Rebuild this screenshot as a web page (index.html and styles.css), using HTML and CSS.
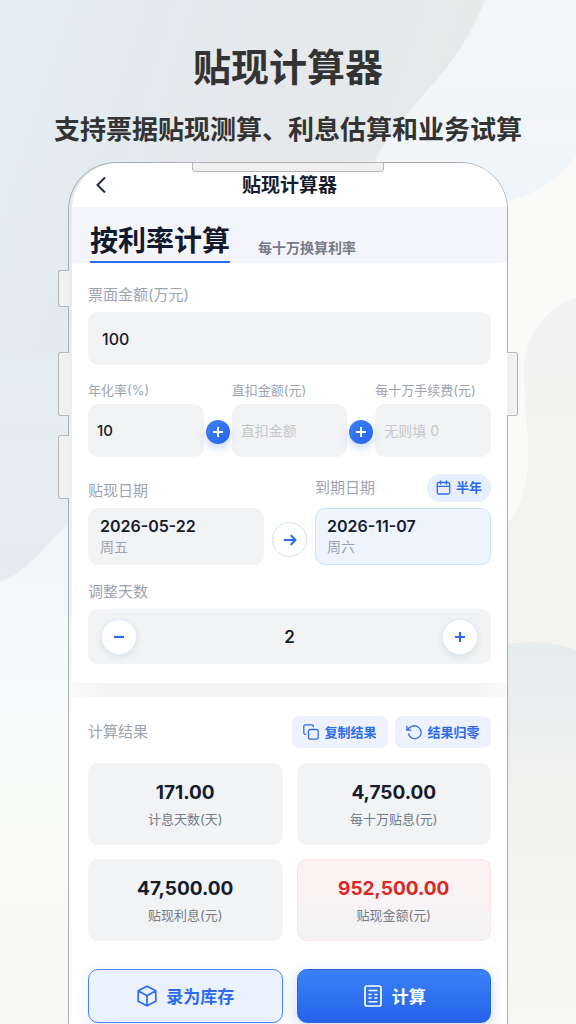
FILE: index.html
```
<!DOCTYPE html>
<html lang="zh-CN">

<head>
  <meta charset="UTF-8">
  <meta name="viewport" content="width=device-width, initial-scale=1.0">
  <title>贴现计算器</title>
  <link rel="stylesheet" href="styles.css">
</head>

<body>
  <div class="showcase">
    <svg class="backdrop" viewBox="0 0 576 1024" preserveAspectRatio="none" aria-hidden="true">
      <defs>
        <linearGradient id="base" gradientUnits="userSpaceOnUse" x1="0" y1="0" x2="500" y2="160">
          <stop offset="0" stop-color="#e5eef7" />
          <stop offset="0.25" stop-color="#e3ebee" />
          <stop offset="0.5" stop-color="#e6e8ec" />
          <stop offset="0.8" stop-color="#e6eaea" />
          <stop offset="1" stop-color="#e5e9e8" />
        </linearGradient>
        <linearGradient id="leftLow" x1="0" y1="0" x2="0" y2="1">
          <stop offset="0" stop-color="#eff4f7" />
          <stop offset="0.4" stop-color="#f8fbfb" />
          <stop offset="0.8" stop-color="#f9faf4" />
          <stop offset="1" stop-color="#f8f8f6" />
        </linearGradient>
        <linearGradient id="leftMid" x1="0" y1="0" x2="0" y2="1">
          <stop offset="0" stop-color="#e4edf0" />
          <stop offset="1" stop-color="#e8ebf1" />
        </linearGradient>
        <linearGradient id="rightTop" x1="0" y1="0" x2="0" y2="1">
          <stop offset="0" stop-color="#f4f5f7" />
          <stop offset="1" stop-color="#f0f5f9" />
        </linearGradient>
        <linearGradient id="rightMid" x1="0" y1="0" x2="0" y2="1">
          <stop offset="0" stop-color="#f2f2f2" />
          <stop offset="1" stop-color="#f4f4ef" />
        </linearGradient>
        <linearGradient id="rightLow" x1="0" y1="0" x2="0" y2="1">
          <stop offset="0" stop-color="#e6ebee" />
          <stop offset="0.4" stop-color="#f1f1ef" />
          <stop offset="1" stop-color="#f7f7f2" />
        </linearGradient>
      </defs>
      <rect width="576" height="1024" fill="url(#base)" />
      <path d="M0 358 C30 354 60 360 100 364 V600 H0Z" fill="url(#leftMid)" />
      <path d="M0 582 C36 570 50 530 100 500 V1024 H0Z" fill="url(#leftLow)" />
      <path d="M490 150 H576 V1024 H490Z" fill="#fafbf8" />
      <path d="M485 0 C462 60 425 90 398 125 C382 146 372 162 365 190 L500 204 C535 195 562 178 576 156 V0Z" fill="url(#rightTop)" />
      <path d="M576 298 C545 306 523 340 524 375 C525 420 532 450 526 480 C520 510 512 520 500 530 V700 H576Z" fill="url(#rightMid)" />
      <path d="M490 648 C520 640 550 640 576 650 V1024 H490Z" fill="url(#rightLow)" />
    </svg>

    <header class="headline">
      <h1>贴现计算器</h1>
      <p>支持票据贴现测算、利息估算和业务试算</p>
    </header>

    <div class="phone">
      <span class="side-key key-mute"></span>
      <span class="side-key key-up"></span>
      <span class="side-key key-down"></span>
      <span class="side-key key-power"></span>
      <span class="notch"></span>

      <main class="screen">
        <div class="nav-bar">
          <button class="back-btn" type="button" aria-label="返回">
            <svg width="12" height="18" viewBox="0 0 12 18" fill="none" stroke="currentColor" stroke-width="2">
              <path d="M10 1.500 2.500 9 10 16.500" />
            </svg>
          </button>
          <h2>贴现计算器</h2>
        </div>

        <nav class="tabs">
          <button class="tab active" type="button">按利率计算</button>
          <button class="tab" type="button">每十万换算利率</button>
        </nav>

        <form class="calc-form">
          <div class="field">
            <label for="amount">票面金额(万元)</label>
            <input id="amount" class="input input-large" type="text" value="100">
          </div>

          <div class="rate-row">
            <div class="field field-small">
              <label for="rate">年化率(%)</label>
              <input id="rate" class="input" type="text" value="10">
            </div>
            <div class="plus-cell"><span class="plus-dot"></span></div>
            <div class="field field-small">
              <label for="deduct">直扣金额(元)</label>
              <input id="deduct" class="input" type="text" placeholder="直扣金额">
            </div>
            <div class="plus-cell"><span class="plus-dot"></span></div>
            <div class="field field-small">
              <label for="fee">每十万手续费(元)</label>
              <input id="fee" class="input" type="text" placeholder="无则填 0">
            </div>
          </div>

          <div class="date-row">
            <div class="date-col">
              <div class="date-head">
                <span class="label">贴现日期</span>
              </div>
              <button class="date-card" type="button">
                <strong>2026-05-22</strong>
                <span>周五</span>
              </button>
            </div>
            <span class="date-arrow">
              <svg width="14" height="14" viewBox="0 0 14 14" fill="none" stroke="currentColor" stroke-width="2" stroke-linecap="round" stroke-linejoin="round">
                <path d="M1.500 7H12.500M8.300 2.700 12.500 7 8.300 11.300" />
              </svg>
            </span>
            <div class="date-col">
              <div class="date-head with-pill">
                <span class="label">到期日期</span>
                <button class="pill" type="button">
                  <svg width="15" height="15" viewBox="0 0 15 15" fill="none" stroke="currentColor" stroke-width="1.300" stroke-linecap="round" stroke-linejoin="round">
                    <rect x="1.300" y="2.500" width="12.400" height="11.500" rx="1.500" />
                    <path d="M1.300 6.300H13.700M4.600 .8V4M10.400 .8V4" />
                  </svg>
                  <span>半年</span>
                </button>
              </div>
              <button class="date-card selected" type="button">
                <strong>2026-11-07</strong>
                <span>周六</span>
              </button>
            </div>
          </div>

          <div class="field">
            <label for="days">调整天数</label>
            <div class="stepper">
              <button class="step-btn" type="button" aria-label="减少">
                <svg width="12" height="12" viewBox="0 0 12 12" stroke="currentColor" stroke-width="2.200">
                  <path d="M1 6H11" />
                </svg>
              </button>
              <input id="days" type="text" value="2">
              <button class="step-btn" type="button" aria-label="增加">
                <svg width="12" height="12" viewBox="0 0 12 12" stroke="currentColor" stroke-width="2.200">
                  <path d="M1 6H11M6 1V11" />
                </svg>
              </button>
            </div>
          </div>
        </form>

        <div class="divider"></div>

        <section class="results">
          <div class="results-head">
            <span class="label">计算结果</span>
            <div class="results-actions">
              <button class="tool-btn" type="button">
                <svg width="16" height="16" viewBox="0 0 16 16" fill="none" stroke="currentColor" stroke-width="1.300" stroke-linecap="round" stroke-linejoin="round">
                  <rect x="5.500" y="5.500" width="9.700" height="9.700" rx="1.700" />
                  <path d="M2.800 10.300H2.300A1.500 1.500 0 0 1 .8 8.800V2.300A1.500 1.500 0 0 1 2.300 .8H8.800A1.500 1.500 0 0 1 10.300 2.300V2.800" />
                </svg>
                <span>复制结果</span>
              </button>
              <button class="tool-btn" type="button">
                <svg width="16" height="16" viewBox="0 0 16 16" fill="none" stroke="currentColor" stroke-width="1.300" stroke-linecap="round" stroke-linejoin="round">
                  <path d="M.9 2.200V6.200H4.900M1.300 6C3.700 1.800 8.800 .5 12.400 3.200C15.400 5.500 15.900 9.600 13.700 12.300C11.400 15.200 7.100 15.400 4.400 12.900C3.500 12.100 2.900 11.100 2.600 9.800" />
                </svg>
                <span>结果归零</span>
              </button>
            </div>
          </div>

          <div class="result-grid">
            <div class="result-card">
              <strong>171.00</strong>
              <span>计息天数(天)</span>
            </div>
            <div class="result-card">
              <strong>4,750.00</strong>
              <span>每十万贴息(元)</span>
            </div>
            <div class="result-card">
              <strong>47,500.00</strong>
              <span>贴现利息(元)</span>
            </div>
            <div class="result-card highlight">
              <strong>952,500.00</strong>
              <span>贴现金额(元)</span>
            </div>
          </div>
        </section>

        <div class="action-bar">
          <button class="action-btn secondary" type="button">
            <svg width="22" height="22" viewBox="0 0 22 22" fill="none" stroke="currentColor" stroke-width="1.700" stroke-linecap="round" stroke-linejoin="round">
              <path d="M11 1.200 19.800 5.800V16.200L11 20.800 2.200 16.200V5.800ZM2.200 5.800 11 10.800 19.800 5.800M11 10.800V20.800" />
            </svg>
            <span>录为库存</span>
          </button>
          <button class="action-btn primary" type="button">
            <svg width="22" height="22" viewBox="0 0 22 22" fill="none" stroke="currentColor" stroke-width="1.700">
              <rect x="3" y="1" width="16" height="20" rx="2" />
              <path d="M6.500 5.500H15.500M6.500 9.500H9.700M12.300 9.500H15.500M6.500 13H9.700M12.300 13H15.500M6.500 16.800H15.500" stroke-width="1.500" />
            </svg>
            <span>计算</span>
          </button>
        </div>
      </main>
    </div>
  </div>
</body>

</html>
```
FILE: styles.css
```
* {
  box-sizing: border-box;
}

body {
  margin: 0;
  font-family: Inter, "Noto Sans CJK SC", sans-serif;
  color: #151c2e;
}

h1,
h2,
p {
  margin: 0;
}

button,
input {
  font-family: inherit;
  color: inherit;
  border: none;
  margin: 0;
}

button {
  padding: 0;
  background: none;
  cursor: pointer;
}

svg {
  flex-shrink: 0;
}

.showcase {
  position: relative;
  display: flex;
  flex-direction: column;
  min-height: 100vh;
  padding: 0 68px;
  overflow: hidden;
}

.backdrop {
  position: absolute;
  top: 0;
  left: 0;
  width: 100%;
  height: 100%;
}

.headline {
  position: relative;
  height: 162px;
  padding-top: 39px;
  text-align: center;
  white-space: nowrap;
  color: #333;
}

.headline h1 {
  font-size: 38px;
  line-height: 56px;
}

.headline p {
  margin: 16px -20px 0;
  font-size: 26px;
  font-weight: bold;
  line-height: 38px;
}

/* phone frame */
.phone {
  position: relative;
  flex: 1;
  display: flex;
  padding-left: 3px;
  border: 1px solid #a9adb0;
  border-bottom: none;
  border-radius: 48px 48px 0 0;
  background: linear-gradient(#e3ebee, #eef2f5 50%, #fdfdfd 65%);
}

.notch {
  position: absolute;
  z-index: 2;
  top: -1px;
  left: 50%;
  width: 192px;
  height: 10px;
  transform: translateX(-50%);
  border: 1px solid #b4b6b8;
  border-radius: 0 0 3px 3px;
  background: #f0f0f0;
}

.side-key {
  position: absolute;
  left: -11px;
  width: 11px;
  height: 64px;
  border: 1px solid #b4b6b8;
  border-right: none;
  border-radius: 3px 0 0 3px;
  background: #f1f1f1;
}

.key-mute {
  top: 107px;
  height: 37px;
}

.key-up {
  top: 189px;
}

.key-down {
  top: 272px;
}

.key-power {
  top: 189px;
  right: -11px;
  left: auto;
  border: 1px solid #b4b6b8;
  border-left: none;
  border-radius: 0 3px 3px 0;
}

.screen {
  flex: 1;
  min-width: 0;
  overflow: hidden;
  border-radius: 46px 46px 0 0;
  background: #fff;
}

.nav-bar {
  position: relative;
  height: 44px;
  display: flex;
  align-items: center;
  justify-content: center;
}

.nav-bar h2 {
  padding-top: 2px;
  font-size: 19px;
  line-height: 28px;
}

.back-btn {
  position: absolute;
  left: 23px;
  top: 13px;
  height: 18px;
  color: #1f2b4d;
}

.back-btn svg {
  display: block;
}

.tabs {
  display: flex;
  align-items: flex-end;
  gap: 28px;
  height: 56px;
  padding: 0 18px;
  background: #f4f5fb;
}

.tab {
  padding-bottom: 4px;
  font-size: 14px;
  font-weight: bold;
  line-height: 22px;
  color: #747b89;
}

.tab.active {
  padding-bottom: 0;
  border-bottom: 2px solid #2f6bf0;
  font-size: 28px;
  line-height: 40px;
  color: #121a2c;
}

/* form */
.calc-form {
  display: flex;
  flex-direction: column;
  padding: 21px 16px 19px;
}

.field {
  display: flex;
  flex-direction: column;
  gap: 6px;
  min-width: 0;
}

label,
.label {
  font-size: 15px;
  line-height: 22px;
  color: #9da4b1;
  white-space: nowrap;
}

.input {
  width: 100%;
  height: 53px;
  padding: 0 9px;
  border-radius: 10px;
  background: #f2f3f5;
  font-size: 15px;
  font-weight: 500;
}

.input::placeholder {
  color: #c6c7cb;
  font-size: 14px;
  font-weight: 400;
}

.input-large {
  padding: 0 14px;
  font-size: 16px;
}

.rate-row {
  display: grid;
  grid-template-columns: 1fr 24px 1fr 24px 1fr;
  column-gap: 2px;
  align-items: end;
  margin-top: 15px;
}

.field-small {
  gap: 4px;
}

.field-small label {
  font-size: 13px;
  line-height: 20px;
}

.plus-cell {
  display: flex;
  align-items: center;
  justify-content: center;
  height: 50px;
}

.plus-dot {
  position: relative;
  width: 24px;
  height: 24px;
  border-radius: 50%;
  background: linear-gradient(135deg, #3b82f6, #2563eb);
  box-shadow: 0 4px 10px rgba(37, 99, 235, 0.25);
}

.plus-dot::before,
.plus-dot::after {
  content: "";
  position: absolute;
  top: 11px;
  left: 7px;
  width: 10px;
  height: 2px;
  background: #fff;
}

.plus-dot::after {
  transform: rotate(90deg);
}

.date-row {
  display: flex;
  align-items: flex-end;
  gap: 8px;
  margin-top: 16px;
}

.date-col {
  flex: 1;
  min-width: 0;
}

.date-head {
  display: flex;
  align-items: flex-end;
  justify-content: space-between;
  height: 35px;
  padding-bottom: 6px;
}

.date-head.with-pill {
  align-items: center;
}

.pill {
  display: flex;
  align-items: center;
  gap: 5px;
  height: 28px;
  padding: 0 9px;
  border-radius: 14px;
  background: #e8eefd;
  font-size: 13px;
  font-weight: bold;
  color: #2f6bf0;
}

.pill span,
.tool-btn span,
.action-btn span {
  padding-bottom: 2px;
}

.date-card {
  display: flex;
  flex-direction: column;
  justify-content: center;
  width: 100%;
  height: 57px;
  padding: 0 11px 2px;
  border: 1px solid #f2f3f5;
  border-radius: 10px;
  background: #f2f3f5;
  text-align: left;
}

.date-card strong {
  font-size: 16px;
  font-weight: 600;
  line-height: 22px;
}

.date-card span {
  font-size: 14px;
  line-height: 20px;
  color: #9da4b1;
}

.date-card.selected {
  border-color: #c9e2fd;
  background: #eef5ff;
}

.date-arrow {
  display: flex;
  align-items: center;
  justify-content: center;
  width: 35px;
  height: 35px;
  margin-bottom: 8px;
  border: 1px solid #cfe2fd;
  border-radius: 50%;
  background: #fff;
  color: #2f6bf0;
}

.date-row + .field {
  margin-top: 16px;
}

.stepper {
  display: flex;
  align-items: center;
  height: 55px;
  padding: 0 13px;
  border-radius: 10px;
  background: #f2f3f5;
}

.stepper input {
  flex: 1;
  min-width: 0;
  background: none;
  font-size: 17px;
  font-weight: 600;
  text-align: center;
}

.step-btn {
  display: flex;
  align-items: center;
  justify-content: center;
  width: 36px;
  height: 36px;
  border: 1px solid #e2ecfd;
  border-radius: 50%;
  background: #fff;
  box-shadow: 0 2px 6px rgba(30, 60, 120, 0.1);
  color: #2f6bf0;
}

.divider {
  height: 14px;
  background: linear-gradient(90deg, #fafafa, #f3f3f3 8%, #f3f3f3 92%, #fafafa);
}

/* results */
.results {
  padding: 19px 16px 0;
}

.results-head {
  display: flex;
  align-items: center;
  justify-content: space-between;
}

.results-actions {
  display: flex;
  gap: 7px;
}

.tool-btn {
  display: flex;
  align-items: center;
  justify-content: center;
  gap: 5px;
  width: 96px;
  height: 32px;
  border-radius: 8px;
  background: #edf2fe;
  font-size: 13px;
  font-weight: bold;
  color: #2f6bf0;
}

.result-grid {
  display: grid;
  grid-template-columns: 1fr 1fr;
  gap: 14px;
  margin-top: 15px;
}

.result-card {
  display: flex;
  flex-direction: column;
  align-items: center;
  justify-content: center;
  gap: 2px;
  height: 82px;
  border: 1px solid #f2f3f5;
  border-radius: 10px;
  background: #f2f3f5;
}

.result-card strong {
  font-size: 19px;
  font-weight: 700;
  line-height: 28px;
}

.result-card span {
  font-size: 13px;
  line-height: 20px;
  color: #747b89;
}

.result-card.highlight {
  border-color: #fde2e2;
  background: linear-gradient(#fef2f2, #f2f3f5);
}

.result-card.highlight strong {
  color: #dc2626;
}

.action-bar {
  display: grid;
  grid-template-columns: 1fr 1fr;
  gap: 14px;
  padding: 28px 16px 1px;
}

.action-btn {
  display: flex;
  align-items: center;
  justify-content: center;
  gap: 8px;
  height: 54px;
  border: 1px solid #4c82f3;
  border-radius: 10px;
  font-size: 17px;
  font-weight: bold;
  box-shadow: 0 4px 14px rgba(37, 99, 235, 0.1);
}

.action-btn.secondary {
  background: #ebf2ff;
  color: #2f6bf0;
}

.action-btn.primary {
  border-color: #2c66df;
  background: linear-gradient(#3b82f6, #2563eb);
  box-shadow: 0 4px 14px rgba(37, 99, 235, 0.25);
  color: #fff;
}
```
